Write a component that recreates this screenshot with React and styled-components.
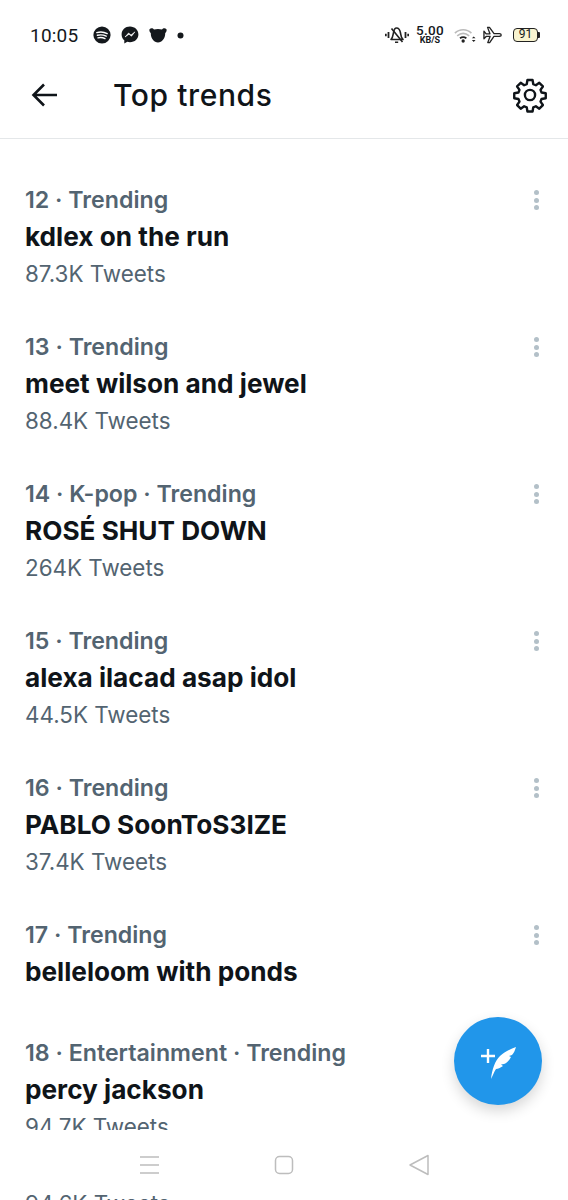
import React from "react";
import styled, { createGlobalStyle } from "styled-components";

const Global = createGlobalStyle`
  html, body { margin: 0; padding: 0; background: #fff; }
  body { font-family: Inter, "Liberation Sans", sans-serif; }
`;

const Page = styled.div`
  position: relative;
  width: 568px;
  height: 1200px;
  overflow: hidden;
  display: flex;
  flex-direction: column;
  background: #fff;
`;

const StatusBar = styled.div`
  height: 70px;
  flex: none;
  display: flex;
  align-items: center;
  padding: 0 28px 0 30px;
  box-sizing: border-box;
  color: #14181c;
`;

const Time = styled.span`
  font-family: Roboto, sans-serif;
  font-size: 19px;
  margin-right: 15px;
  letter-spacing: 0.2px;
`;

const NotifIcons = styled.div`
  display: flex;
  align-items: center;
  gap: 10px;
  flex: 1;
`;

const SysIcons = styled.div`
  display: flex;
  align-items: center;
`;

const Glyph = styled.svg`
  flex: none;
  margin-left: ${(p) => p.$gap || 0}px;
`;

const Speed = styled.div`
  display: flex;
  flex-direction: column;
  align-items: center;
  margin: 0 0 2px 8px;
  width: 26px;
  font-family: Roboto, sans-serif;
  font-weight: 500;
  font-size: 13.5px;
  line-height: 12px;
  letter-spacing: 0.3px;
`;

const SpeedUnit = styled.span`
  font-size: 9px;
  font-weight: 700;
  line-height: 9px;
  letter-spacing: 0;
`;

const Battery = styled.div`
  display: flex;
  align-items: center;
  margin-left: 10px;
`;

const BatteryBody = styled.div`
  width: 25px;
  height: 14px;
  border: 1.5px solid #222;
  border-radius: 4px;
  background: #f8f3cf;
  box-sizing: border-box;
  font-family: Roboto, sans-serif;
  font-size: 12px;
  line-height: 11px;
  text-align: center;
`;

const BatteryTip = styled.div`
  width: 2px;
  height: 6px;
  background: #222;
  border-radius: 0 1px 1px 0;
`;

const Header = styled.header`
  flex: none;
  display: flex;
  align-items: center;
  padding: 0 20px 18px 31px;
  border-bottom: 1px solid #e4e7e9;
  box-sizing: content-box;
  height: 50px;
  color: #0f1419;
`;

const Title = styled.h1`
  flex: 1;
  margin: 0 0 0 56px;
  font-size: 30px;
  font-weight: 500;
  letter-spacing: 0.6px;
`;

const List = styled.main`
  flex: 1;
  min-height: 0;
  overflow: hidden;
  padding-top: 42px;
`;

const Row = styled.article`
  position: relative;
  padding: 0 25px;
  height: ${(p) => (p.$short ? 118 : 147)}px;
  box-sizing: border-box;
`;

const Meta = styled.div`
  font-size: 23.2px;
  font-weight: 600;
  line-height: 39px;
  height: 37px;
  color: #536471;
`;

const Name = styled.div`
  font-size: 26.2px;
  font-weight: 700;
  line-height: 37px;
  height: 37px;
  color: #0f1419;
`;

const Count = styled.div`
  font-size: 22.4px;
  line-height: 37px;
  color: #536471;
`;

const More = styled.div`
  position: absolute;
  top: 9px;
  right: 29.5px;
  display: flex;
  flex-direction: column;
  gap: 2.5px;
`;

const Dot = styled.i`
  width: 5px;
  height: 5px;
  border-radius: 50%;
  background: #b3c0c8;
`;

const NavBar = styled.nav`
  flex: none;
  height: 60px;
  box-sizing: border-box;
  padding-top: 10px;
  display: flex;
  align-items: center;
  justify-content: center;
  gap: 114px;
  background: #fff;
`;

const Leftover = styled.div`
  flex: none;
  height: 10px;
  overflow: hidden;
  padding: 0 25px;
  font-size: 22.4px;
  line-height: 27px;
  color: #536471;
`;

const Fab = styled.button`
  position: absolute;
  left: 454px;
  top: 1017px;
  width: 88px;
  height: 88px;
  border: 0;
  padding: 0;
  border-radius: 50%;
  background: #2196ea;
  box-shadow: 0 6px 14px rgba(0, 0, 0, 0.16);
  display: flex;
  align-items: center;
  justify-content: center;
`;

const rows = [
  ["12 · Trending", "kdlex on the run", "87.3K Tweets"],
  ["13 · Trending", "meet wilson and jewel", "88.4K Tweets"],
  ["14 · K-pop · Trending", "ROSÉ SHUT DOWN", "264K Tweets"],
  ["15 · Trending", "alexa ilacad asap idol", "44.5K Tweets"],
  ["16 · Trending", "PABLO SoonToS3IZE", "37.4K Tweets"],
  ["17 · Trending", "belleloom with ponds", null],
  ["18 · Entertainment · Trending", "percy jackson", "94.7K Tweets"],
];

export default function App() {
  return (
    <Page>
      <Global />
      <StatusBar>
        <Time>10:05</Time>
        <NotifIcons>
          <svg width="18" height="18" viewBox="0 0 18 18">
            <circle cx="9" cy="9" r="8.6" fill="#14181c" />
            <path d="M3.8 6.6C7 5.7 11 5.9 14.2 7.6M4.4 9.3C7.2 8.6 10.4 8.8 13.2 10.2M5 11.9C7.4 11.3 9.8 11.5 12 12.6" fill="none" stroke="#fff" strokeWidth="1.4" strokeLinecap="round" />
          </svg>
          <svg width="18" height="18" viewBox="0 0 18 18">
            <path d="M9 .6C4.2.6.6 4 .6 8.5c0 2.4 1 4.4 2.7 5.8v3.2l3-1.7c.9.3 1.8.4 2.7.4 4.8 0 8.4-3.4 8.4-7.7S13.8.6 9 .6z" fill="#14181c" />
            <path d="M4 11l3.6-4 2.4 2 3.9-3.1-3.4 4.3-2.5-2z" fill="#fff" stroke="#fff" strokeWidth=".6" />
          </svg>
          <svg width="18" height="15" viewBox="0 0 18 15">
            <path d="M.5 1.2C2.2-.2 4 .3 5 1.6c2.5-.7 5.5-.7 8 0 1-1.3 2.8-1.8 4.5-.4.4 1.7-.2 3-1.3 3.8.3 5-3.2 9.6-7.2 9.6S1.5 10 1.8 5C.7 4.2.1 2.9.5 1.2z" fill="#14181c" />
          </svg>
          <svg width="7" height="7" viewBox="0 0 7 7">
            <circle cx="3.5" cy="3.5" r="3" fill="#14181c" />
          </svg>
        </NotifIcons>
        <SysIcons>
          <Glyph width="24" height="18" viewBox="0 0 24 18" fill="none" stroke="#222" strokeWidth="1.6" strokeLinejoin="round">
            <path d="M6 13.5C8 11.5 8 9 8.5 6.5 9 3.5 10.5 2 11.5 2 13.5 2 15 4 15.5 7 16 10 16 12 18 13.5z" />
            <path d="M10 16.3h3.2M6.5 2.5L17.5 16" />
            <path d="M3.5 6v6M.8 7.8v2.4M20.5 6v6M23.2 7.8v2.4" strokeWidth="1.8" />
          </Glyph>
          <Speed>
            5.00
            <SpeedUnit>KB/S</SpeedUnit>
          </Speed>
          <Glyph $gap={11} width="22" height="17" viewBox="0 0 24 18" fill="none">
            <path d="M1 6.5C6 1.5 14 1.5 19 6.5M3.5 9.5C7.5 6 12.5 6 16.5 9.5" stroke="#bbb" strokeWidth="1.8" />
            <path d="M6.5 12C8.8 10.3 11.2 10.3 13.5 12" stroke="#222" strokeWidth="1.8" />
            <circle cx="10" cy="15" r="1.8" fill="#222" />
            <path d="M19.5 12l2-2 2 2zM19.5 14l2 2 2-2z" fill="#222" />
          </Glyph>
          <Glyph $gap={7} width="20" height="18" viewBox="0 0 21 18" fill="none" stroke="#222" strokeWidth="1.4" strokeLinejoin="round">
            <path d="M1 5l2.3 2.8 4-.1L4.8 1h2l4.8 6.5 5.6.1c2.4.2 2.7 2.4 0 2.7l-5.700.2L7 17H5l2.500-6.600-4.200.1L1 13z" />
          </Glyph>
          <Battery>
            <BatteryBody>91</BatteryBody>
            <BatteryTip />
          </Battery>
        </SysIcons>
      </StatusBar>
      <Header>
        <svg width="26" height="24" viewBox="0 0 26 24" fill="none" stroke="#0f1419" strokeWidth="2.6">
          <path d="M26 12H3M13 1.5L2.5 12 13 22.5" />
        </svg>
        <Title>Top trends</Title>
        <svg width="36" height="36" viewBox="0 0 24 24" fill="none" stroke="#0f1419" strokeWidth="1.6" strokeLinejoin="round">
          <circle cx="12" cy="12" r="3.4" />
          <path d="M10.3 2h3.4l.5 2.8 1.7.7 2.3-1.6 2.4 2.4-1.6 2.3.7 1.7 2.8.5v3.4l-2.8.5-.7 1.7 1.6 2.3-2.4 2.4-2.300-1.600-1.700.7-.5 2.800h-3.400l-.5-2.800-1.700-.7-2.300 1.600-2.400-2.400 1.600-2.300-.7-1.700-2.800-.5v-3.400l2.800-.5.700-1.700-1.600-2.300 2.400-2.400 2.300 1.600 1.700-.7z" />
        </svg>
      </Header>
      <List>
        {rows.map(([meta, name, count], i) => (
          <Row key={meta} $short={!count}>
            <Meta>{meta}</Meta>
            <Name>{name}</Name>
            {count && <Count>{count}</Count>}
            {i < 6 && (
              <More>
                <Dot />
                <Dot />
                <Dot />
              </More>
            )}
          </Row>
        ))}
      </List>
      <NavBar>
        <svg width="21" height="20" viewBox="0 0 21 20" stroke="#bdbdbd" strokeWidth="1.5">
          <path d="M1 2h19M1 10h19M1 18h19" />
        </svg>
        <svg width="20" height="20" viewBox="0 0 20 20" fill="none" stroke="#bdbdbd" strokeWidth="1.5">
          <rect x="1.5" y="1.5" width="17" height="17" rx="4" />
        </svg>
        <svg width="22" height="22" viewBox="0 0 22 22" fill="none" stroke="#bdbdbd" strokeWidth="1.5" strokeLinejoin="round">
          <path d="M20 1.5L2 11l18 9.5z" />
        </svg>
      </NavBar>
      <Leftover>94.6K Tweets</Leftover>
      <Fab aria-label="New tweet">
        <svg width="40" height="40" viewBox="0 0 40 40" fill="#fff">
          <path d="M3 13.8h5.8V8h2.4v5.8H17v2.4h-5.8V22H8.800v-5.800H3z" />
          <path d="M13 38C14 28 17 20 22 15 27 10 33 8 38 6 37 9 36 12 34 14L31 15 33 16C31 20 29 22 26 23L23 23.5 25 25C22 27 20 28 18 28 16 31 15 34 13 38z" />
        </svg>
      </Fab>
    </Page>
  );
}
